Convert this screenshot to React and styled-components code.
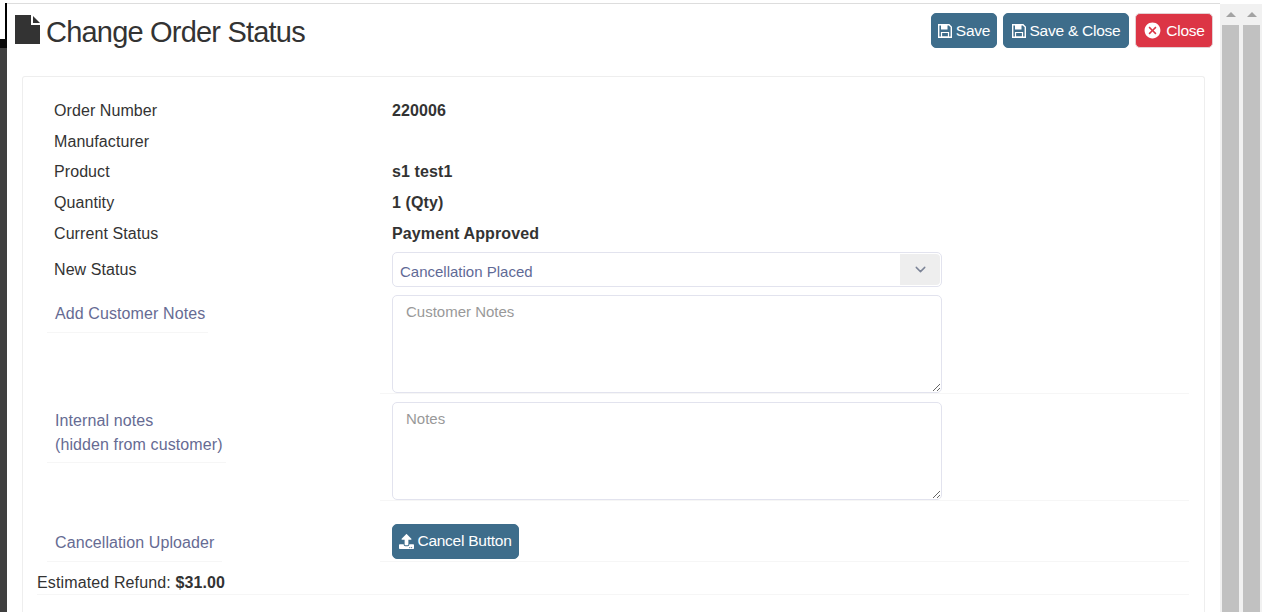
import React from "react";
import styled, { createGlobalStyle } from "styled-components";
import { FaUpload } from "react-icons/fa";
import { MdCancel } from "react-icons/md";
import { ChevronDown } from "lucide-react";

const GlobalStyle = createGlobalStyle`
    html, body {
        margin: 0;
        height: 100%;
        overflow: hidden;
        background: #fff;
    }
    body {
        font-family: "Liberation Sans", Arial, sans-serif;
        font-size: 16px;
        line-height: 24px;
        letter-spacing: 0.08px;
        color: #333;
    }
    * {
        box-sizing: border-box;
    }
`;

const Page = styled.div`
    display: flex;
    height: 612px;
    padding-top: 3px;
`;

const Backdrop = styled.div`
    width: 7px;
    display: flex;
    flex-direction: column;
`;

const BackdropTop = styled.div`
    height: 36px;
    border-right: 2px solid #000;
    background: #fff;
`;

const BackdropBand = styled.div`
    height: 9px;
    background: #0a0a0a;
`;

const BackdropRest = styled.div`
    flex: 1;
    background: #3f3f3f;
`;

const Modal = styled.main`
    flex: 1;
    min-width: 0;
    border-top: 1px solid #ddd;
    background: #fff;
    overflow: hidden;
`;

const Header = styled.header`
    display: flex;
    justify-content: space-between;
    align-items: flex-start;
    height: 72px;
    padding: 9px 7px 0 8px;
`;

const Title = styled.h1`
    display: flex;
    align-items: center;
    gap: 6px;
    margin: 0;
    height: 38px;
    font-size: 29px;
    font-weight: 400;
    line-height: 38px;
    letter-spacing: -0.8px;
    color: #333;
`;

const FileIcon = styled.svg`
    width: 25px;
    height: 29px;
    margin-bottom: 5px;
    fill: #333;
`;

const Actions = styled.div`
    display: flex;
    gap: 6px;
`;

const Button = styled.button`
    display: inline-flex;
    align-items: center;
    justify-content: center;
    gap: 4px;
    width: ${(p) => p.$width}px;
    height: 35px;
    padding: 0;
    border: 1px solid ${(p) => (p.$danger ? "#e4d0d3" : "#3e6d8b")};
    border-radius: 5px;
    background: ${(p) => (p.$danger ? "#dc3545" : "#3e6d8b")};
    color: #fff;
    font-family: inherit;
    font-size: 15.5px;
    letter-spacing: -0.25px;
    cursor: pointer;

    svg {
        width: 14px;
        height: 14px;
    }
`;

const CloseButton = styled(Button)`
    svg {
        width: 19px;
        height: 19px;
    }
`;

const Card = styled.section`
    margin: 0 15px;
    padding: 22px 15px 0 14px;
    border: 1px solid #eee;
    border-bottom: none;
    border-radius: 3px 3px 0 0;
    height: 600px;
`;

const InfoRow = styled.div`
    display: grid;
    grid-template-columns: 333px 1fr;
    height: 30.7px;
    margin-left: 10px;
`;

const InfoLabel = styled.div`
    padding-left: 7px;
    height: 24px;
`;

const StatusLabel = styled(InfoLabel)`
    height: 26px;
    padding-top: 2px;
`;

const InfoValue = styled.div`
    padding-left: 12px;
    font-weight: 700;
    letter-spacing: 0.12px;
`;

const SelectRow = styled.div`
    display: grid;
    grid-template-columns: 333px 1fr;
    align-items: center;
    margin: -0.5px 0 8px 10px;
`;

const NotesRow = styled.div`
    display: grid;
    grid-template-columns: 333px 1fr;
    align-items: start;
    margin-left: 10px;
`;

const SideLabel = styled.div`
    width: fit-content;
    min-width: ${(p) => p.$min || "auto"};
    padding: ${(p) => p.$top ?? 7}px 3px ${(p) => p.$bottom ?? 6}px 8px;
    border-bottom: 1px solid #f6f6f6;
    color: #666b93;
    letter-spacing: 0.1px;
`;

const Field = styled.div`
    padding-left: 12px;
    border-bottom: 1px solid #f6f6f6;
    margin-bottom: ${(p) => p.$gap || "0"};
`;

const Select = styled.div`
    display: flex;
    justify-content: space-between;
    width: 550px;
    height: 35px;
    margin-left: 12px;
    padding: 1px;
    border: 1px solid #e2e3ee;
    border-radius: 5px;
    color: #5f6a96;
    font-size: 15px;
    letter-spacing: 0;
`;

const SelectText = styled.span`
    padding: 5px 0 0 6px;
    line-height: 26px;
`;

const SelectArrow = styled.span`
    display: flex;
    align-items: center;
    justify-content: center;
    width: 40px;
    background: #eee;
    border-radius: 0 4px 4px 0;
    color: #7c8497;

    svg {
        width: 17px;
        height: 17px;
    }
`;

const NotesInput = styled.textarea`
    display: block;
    width: 550px;
    height: 98px;
    padding: 4px 13px;
    border: 1px solid #e2e3ee;
    border-radius: 5px;
    background: #fff;
    font-family: inherit;
    font-size: 15px;
    line-height: 24px;
    color: #333;
    outline: none;

    &::placeholder {
        color: #999;
        opacity: 1;
    }
`;

const UploadRow = styled.div`
    display: grid;
    grid-template-columns: 333px 1fr;
    align-items: end;
    margin: 23px 0 0 10px;
`;

const UploadField = styled.div`
    padding: 0 0 2px 12px;
    border-bottom: 1px solid #f6f6f6;
`;

const UploadButton = styled(Button)`
    gap: 3px;

    svg {
        width: 15px;
        height: 15px;
    }
`;

const Refund = styled.div`
    height: 33px;
    padding-top: 9px;
    border-bottom: 1px solid #f6f6f6;
    line-height: 23px;
    letter-spacing: 0.13px;
`;

const RefundAmount = styled.strong`
    font-weight: 700;
`;

const Scrollbar = styled.div`
    display: flex;
    flex-direction: column;
    align-items: center;
    width: 21px;
    padding: 0 2px;
    background: #f1f1f1;
    margin-top: 1px;
`;

const ScrollArrow = styled.div`
    height: 21px;
    width: 100%;
    display: flex;
    align-items: center;
    justify-content: center;

    &::before {
        content: "";
        border-left: 5px solid transparent;
        border-right: 5px solid transparent;
        border-bottom: 5px solid #a3a3a3;
    }
`;

const ScrollThumb = styled.div`
    flex: 1;
    width: 100%;
    background: #c1c1c1;
`;

const SaveIcon = () => (
    <svg viewBox="0 0 14 14">
        <path d="M.7.7H11L13.3 3V13.3H.7Z" fill="none" stroke="#fff" strokeWidth="1.4" />
        <path d="M3 1H9.5V5.5H3Z" fill="#fff" />
        <path d="M3.5 8.5H10.5V13H3.5Z" fill="none" stroke="#fff" strokeWidth="1.2" />
    </svg>
);

const infoRows = [
    ["Order Number", "220006"],
    ["Manufacturer", ""],
    ["Product", "s1 test1"],
    ["Quantity", "1 (Qty)"],
    ["Current Status", "Payment Approved"],
];

const App = () => {
    return (
        <>
            <GlobalStyle />
            <Page>
                <Backdrop>
                    <BackdropTop />
                    <BackdropBand />
                    <BackdropRest />
                </Backdrop>
                <Modal>
                    <Header>
                        <Title>
                            <FileIcon viewBox="0 0 25 29">
                                <path d="M0 0H16V10H25V29H0Z" />
                                <path d="M18 1L25 8H18Z" />
                            </FileIcon>
                            Change Order Status
                        </Title>
                        <Actions>
                            <Button $width={66}><SaveIcon />Save</Button>
                            <Button $width={126}><SaveIcon />Save &amp; Close</Button>
                            <CloseButton $width={78} $danger><MdCancel />Close</CloseButton>
                        </Actions>
                    </Header>
                    <Card>
                        {infoRows.map(([label, value]) => (
                            <InfoRow key={label}>
                                <InfoLabel>{label}</InfoLabel>
                                <InfoValue>{value}</InfoValue>
                            </InfoRow>
                        ))}
                        <SelectRow>
                            <StatusLabel>New Status</StatusLabel>
                            <Select>
                                <SelectText>Cancellation Placed</SelectText>
                                <SelectArrow><ChevronDown strokeWidth={2} /></SelectArrow>
                            </Select>
                        </SelectRow>
                        <NotesRow>
                            <SideLabel>Add Customer Notes</SideLabel>
                            <Field $gap="8px">
                                <NotesInput placeholder="Customer Notes" />
                            </Field>
                        </NotesRow>
                        <NotesRow>
                            <SideLabel $bottom={5}>Internal notes<br />(hidden from customer)</SideLabel>
                            <Field>
                                <NotesInput placeholder="Notes" />
                            </Field>
                        </NotesRow>
                        <UploadRow>
                            <SideLabel $top={0} $min="175px">Cancellation Uploader</SideLabel>
                            <UploadField>
                                <UploadButton $width={127}><FaUpload />Cancel Button</UploadButton>
                            </UploadField>
                        </UploadRow>
                        <Refund>
                            Estimated Refund: <RefundAmount>$31.00</RefundAmount>
                        </Refund>
                    </Card>
                </Modal>
                <Scrollbar>
                    <ScrollArrow />
                    <ScrollThumb />
                </Scrollbar>
                <Scrollbar>
                    <ScrollArrow />
                    <ScrollThumb />
                </Scrollbar>
            </Page>
        </>
    );
};

export default App;
